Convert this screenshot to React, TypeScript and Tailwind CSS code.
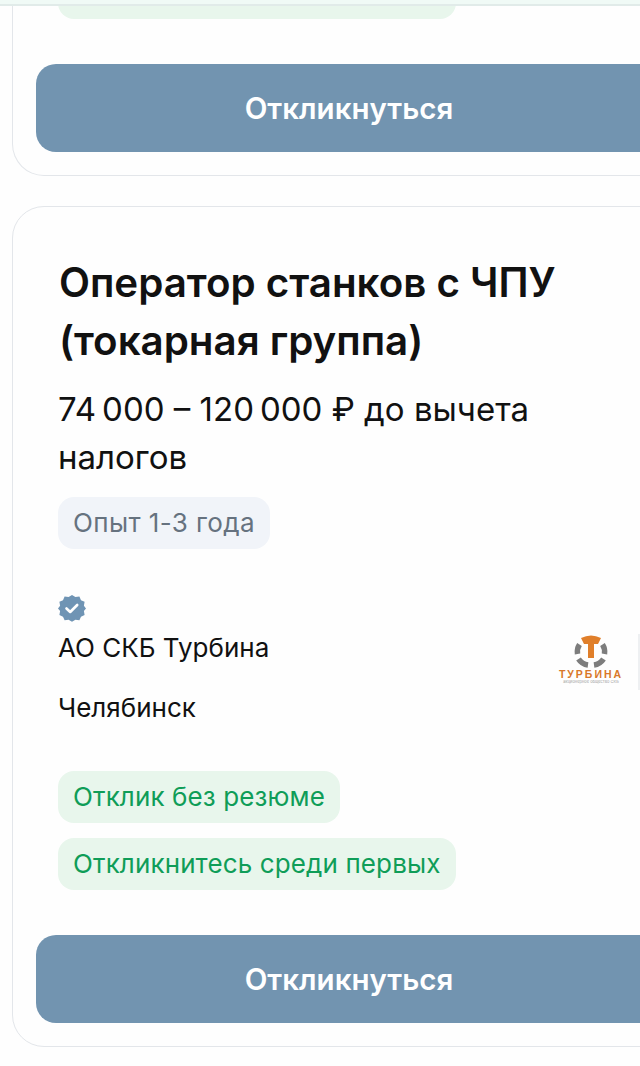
const font = "font-['Inter',sans-serif]";

function RespondButton() {
  return (
    <button className="w-full h-[88px] rounded-[20px] bg-[#7294b0] text-white text-[29.500px] font-semibold">
      Откликнуться
    </button>
  );
}

function Tag({ children, green }: { children: React.ReactNode; green?: boolean }) {
  return (
    <div
      className={
        green
          ? "w-fit h-[52px] px-[15px] pb-[2px] flex items-center rounded-[16px] bg-[#e8f6ec] text-[#0f9d58] text-[26px] tracking-[0.12px]"
          : "w-fit h-[52px] px-[15px] pb-[2px] flex items-center rounded-[16px] bg-[#f1f4f9] text-[#66727f] text-[26px] tracking-[0.4px]"
      }
    >
      {children}
    </div>
  );
}

function VerifiedIcon() {
  return (
    <svg width="28" height="28" viewBox="0 0 28 28">
      <path
        fill="#6f94b4"
        d="M14 1l3.400 2.200 4-.5 1.600 3.700 3.600 1.800-.7 4L28 15l-2.100 2.800.7 4-3.600 1.800-1.600 3.700-4-.5L14 29l-3.400-2.200-4 .5L5 23.600l-3.600-1.800.7-4L0 15l2.100-2.800-.7-4L5 6.400l1.600-3.700 4 .5z"
        transform="scale(1 .96)"
      />
      <path d="M8.500 14.500l3.700 3.500 7-7" fill="none" stroke="#fff" strokeWidth="2.600" strokeLinecap="round" strokeLinejoin="round" />
    </svg>
  );
}

function TurbinaLogo() {
  return (
    <div className="w-[82px] h-[56px] shrink-0 border-r-2 border-[#eef0f2] flex flex-col items-center pr-[14px]">
      <svg width="36" height="36" viewBox="0 0 36 36" className="shrink-0">
        <g fill="none" stroke="#7d7d7d" strokeWidth="5.500">
          <path d="M6.500 10.500A13.500 13.500 0 0 0 4.500 20" />
          <path d="M5.500 25a13.500 13.500 0 0 0 9.500 6" />
          <path d="M21 31a13.500 13.500 0 0 0 9.500-6" />
          <path d="M31.500 20a13.500 13.500 0 0 0-2-9.500" />
        </g>
        <path fill="#e07f2a" d="M8 4q10-5 20 0l-3 6h-4v14h-6V10h-4z" />
      </svg>
      <div className="-mt-[1px] text-[10.500px] leading-[10px] font-bold tracking-[2px] text-[#d9782a] font-['Liberation_Sans',sans-serif] whitespace-nowrap">
        ТУРБИНА
      </div>
      <div className="text-[4px] leading-[6px] text-[#a3a3a3] whitespace-nowrap">акционерное общество СКБ</div>
    </div>
  );
}

export default function App() {
  return (
    <div className={`relative w-[640px] h-[1066px] overflow-hidden bg-[#fefefe] ${font}`}>
      <div className="absolute top-0 left-0 right-0 h-[6px] bg-[#f0faf6] border-b-2 border-[#e1ebe9]" />

      <div className="px-3 pb-[20px]">
        {/* previous card, scrolled off the top */}
        <div className="w-[674px] h-[176px] px-[23px] pb-[23px] flex flex-col justify-end rounded-b-[32px] border border-t-0 border-[#e3e6ea]">
          <div className="w-[398px] h-[19px] ml-[22px] mb-[45px] rounded-b-[16px] bg-[#e8f6ec]" />
          <RespondButton />
        </div>

        <div className="w-[674px] mt-[30px] h-[841px] px-[23px] pt-[47px] rounded-[32px] border border-[#e3e6ea]">
          <div className="pl-[22px] pr-[80px]">
            <h2 className="pl-[1px] text-[40.300px] leading-[58px] font-semibold text-[#111] whitespace-nowrap">
              Оператор станков с ЧПУ
              <br />
              (токарная группа)
            </h2>
            <p className="mt-[15px] text-[33px] leading-[48px] text-[#111] w-[490px]">
              74&#8201;000 – 120&#8201;000 ₽ до вычета налогов
            </p>
            <div className="mt-[16px]">
              <Tag>Опыт 1-3 года</Tag>
            </div>
            <div className="mt-[45px] flex justify-between items-start w-[582px]">
              <div>
                <VerifiedIcon />
                <div className="mt-[8px] text-[26px] leading-[36px] text-[#111]">АО СКБ Турбина</div>
              </div>
              <div className="mt-[40px]">
                <TurbinaLogo />
              </div>
            </div>
            <div className="text-[26px] leading-[36px] text-[#111]">Челябинск</div>
            <div className="mt-[45px] flex flex-col gap-[15px]">
              <Tag green>Отклик без резюме</Tag>
              <Tag green>Откликнитесь среди первых</Tag>
            </div>
          </div>
          <div className="mt-[45px]">
            <RespondButton />
          </div>
        </div>
      </div>
    </div>
  );
}
